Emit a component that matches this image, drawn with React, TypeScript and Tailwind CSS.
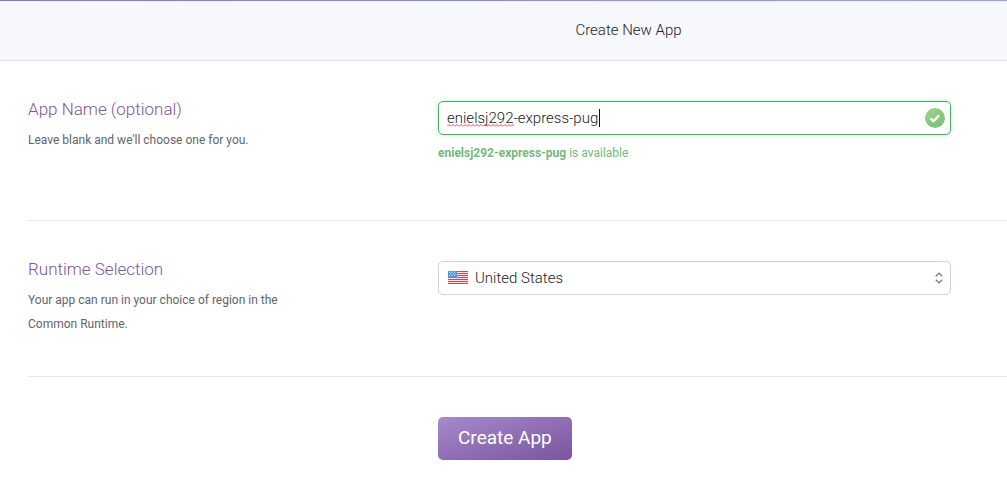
import { useState, type ReactNode } from 'react';

function CheckBadge() {
  return (
    <svg viewBox="0 0 20 20" className="h-5 w-5" aria-hidden="true">
      <defs>
        <linearGradient id="badge" x1="0" y1="0" x2="1" y2="1">
          <stop offset="0" stopColor="#a3d583" />
          <stop offset="1" stopColor="#72bd7c" />
        </linearGradient>
      </defs>
      <circle cx="10" cy="10" r="10" fill="url(#badge)" />
      <path d="M5.4 10.4 8.5 13.2 14 7.4" fill="none" stroke="#fff" strokeWidth="2.3" />
    </svg>
  );
}

const STRIPES = [0, 2, 4, 6, 8, 10, 12];
const STARS = [
  [1.5, 1.2], [4, 1.2], [6.5, 1.2],
  [2.8, 2.9], [5.3, 2.9], [7.8, 2.9],
  [1.5, 4.6], [4, 4.6], [6.5, 4.6],
];

function UsFlag() {
  return (
    <svg viewBox="0 0 20 13" className="h-[13px] w-5" aria-hidden="true">
      <rect width="20" height="13" rx="1" fill="#f6e6e6" />
      {STRIPES.map((y) => (
        <rect key={y} y={y} width="20" height="1" fill="#c0504f" />
      ))}
      <rect width="9" height="7" fill="#4f8fd0" />
      {STARS.map(([x, y]) => (
        <circle key={`${x}-${y}`} cx={x} cy={y} r="0.6" fill="#e8f2fb" />
      ))}
    </svg>
  );
}

function SpellingMark() {
  return (
    <svg viewBox="0 0 154 34" className="h-[34px] w-[154px]" aria-hidden="true">
      <defs>
        <pattern id="wave" width="4" height="3" patternUnits="userSpaceOnUse" y="23">
          <path d="M0 2.5 2 .5 4 2.5" fill="none" stroke="#e0474c" strokeWidth="1" />
        </pattern>
      </defs>
      <rect y="23" width="67" height="3" fill="url(#wave)" />
      <rect x="152" y="8" width="1" height="18" fill="#111" />
    </svg>
  );
}

function UpDown() {
  return (
    <svg viewBox="0 0 8 12" className="h-3 w-2" fill="none" stroke="#787a80" strokeWidth="1.4" aria-hidden="true">
      <path d="M.8 4.2 4 1.1 7.2 4.2M.8 7.8 4 10.9 7.2 7.8" />
    </svg>
  );
}

function Field(props: { id: string; label: string; help: string; children: ReactNode }) {
  return (
    <section className="ml-7 flex border-b border-[#e6e7ec] py-10 pr-14">
      <div className="w-[410px] shrink-0">
        <label htmlFor={props.id} className="block text-[17px] leading-4 font-light text-[#79589f]">
          {props.label}
        </label>
        <p className="mt-[11px] max-w-[280px] text-xs leading-6 text-[#62656f]">{props.help}</p>
      </div>
      <div className="min-w-0 flex-1">{props.children}</div>
    </section>
  );
}

export default function App() {
  const [name, setName] = useState('enielsj292-express-pug');

  return (
    <div className="min-h-screen bg-white font-['Roboto',sans-serif] text-[#222226]">
      <header className="border-b border-[#dfe3ec] bg-[#f7f8fc]">
        <div className="h-[2px] border-b border-[#e8e9fa] bg-linear-to-r from-[#8b7cb4] to-[#97a8ce]" />
        <h1 className="pt-4 pb-[18px] pl-[250px] text-center text-[15px] leading-6 font-light">Create New App</h1>
      </header>

      <form onSubmit={(event) => event.preventDefault()}>
        <Field id="app-name" label="App Name (optional)" help="Leave blank and we'll choose one for you.">
          <div className="relative">
            <input
              id="app-name"
              type="text"
              spellCheck={false}
              value={name}
              onChange={(event) => setName(event.target.value)}
              className="block h-[34px] w-full rounded-[5px] border border-[#4dac6b] bg-white pr-9 pl-2 text-[15px] font-light shadow-[0_0_4px_#b9efc1] outline-none"
            />
            <span className="pointer-events-none absolute top-0 left-[9px]">
              <SpellingMark />
            </span>
            <span className="pointer-events-none absolute top-[7px] right-[6px]">
              <CheckBadge />
            </span>
          </div>
          <p className="mt-[6px] mb-[15px] text-xs leading-6 text-[#76b77c]">
            <strong className="font-bold">{name}</strong> is available
          </p>
        </Field>

        <Field id="region" label="Runtime Selection" help="Your app can run in your choice of region in the Common Runtime.">
          <div className="relative">
            <select
              id="region"
              className="block h-[34px] w-full appearance-none rounded-[5px] border border-[#cfd1df] bg-white pr-8 pl-9 text-[15px] font-light"
            >
              <option>United States</option>
            </select>
            <span className="pointer-events-none absolute top-[10px] left-[10px]">
              <UsFlag />
            </span>
            <span className="pointer-events-none absolute top-[11px] right-2">
              <UpDown />
            </span>
          </div>
        </Field>

        <div className="flex pt-10 pb-8 pl-[438px]">
          <button
            type="submit"
            className="h-[43px] rounded-[5px] bg-linear-to-br from-[#a78acb] to-[#79559e] px-5 text-[19px] text-white"
          >
            Create App
          </button>
        </div>
      </form>
    </div>
  );
}
